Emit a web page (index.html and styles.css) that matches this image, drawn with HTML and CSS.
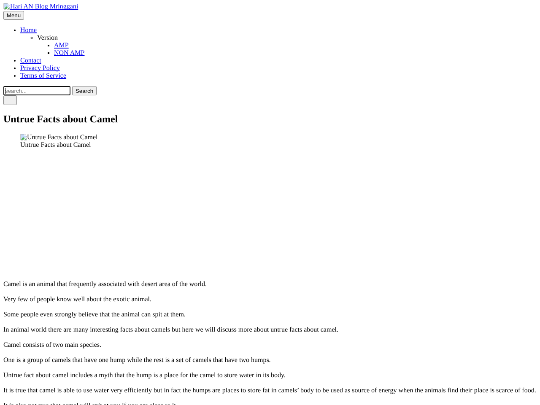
FILE: index.html
```html
<!DOCTYPE html>
<html lang="en">
<head>
<meta charset="utf-8">
<title>Untrue Facts about Camel</title>
<link rel="stylesheet" href="styles.css">
</head>
<body>
<div class="viewport">
<main class="page">
<header>
<a class="logo" href="#"><svg class="broken" viewBox="0 0 16 16"><path d="M1 1h10l4 4v10H1z" fill="#c3d9f7" stroke="#999"/><path d="M2 14l5-6 3 3 3-2v5z" fill="#4caf50"/><path d="M11 1v4h4M15 8l-8 8" fill="none" stroke="#fff" stroke-width="2"/></svg>Hari AN Blog Mringgani</a>
<button class="btn menu">Menu</button>
</header>
<ul class="nav">
<li><a href="#">Home</a>
<ul class="level2"><li>Version
<ul class="level3"><li><a href="#">AMP</a></li><li><a href="#">NON AMP</a></li></ul>
</li></ul>
</li>
<li><a href="#">Contact</a></li>
<li><a href="#">Privacy Policy</a></li>
<li><a href="#">Terms of Service</a></li>
</ul>
<form class="search"><input type="text" placeholder="search..."><button type="button" class="btn submit">Search</button></form>
<button class="btn toggle" aria-label="Toggle"></button>
<h1>Untrue Facts about Camel</h1>
<figure>
<div class="alt"><svg class="broken" viewBox="0 0 16 16"><path d="M1 1h10l4 4v10H1z" fill="#c3d9f7" stroke="#999"/><path d="M2 14l5-6 3 3 3-2v5z" fill="#4caf50"/><path d="M11 1v4h4M15 8l-8 8" fill="none" stroke="#fff" stroke-width="2"/></svg>Untrue Facts about Camel</div>
<figcaption>Untrue Facts about Camel</figcaption>
</figure>
<article>
<p>Camel is an animal that frequently associated with desert area of the world.</p>
<p>Very few of people know well about the exotic animal.</p>
<p>Some people even strongly believe that the animal can spit at them.</p>
<p>In animal world there are many interesting facts about camels but here we will discuss more about untrue facts about camel.</p>
<p>Camel consists of two main species.</p>
<p>One is a group of camels that have one hump while the rest is a set of camels that have two humps.</p>
<p>Untrue fact about camel includes a myth that the hump is a place for the camel to store water in its body.</p>
<p>It is true that camel is able to use water very efficiently but in fact the humps are places to store fat in camels’ body to be used as source of energy when the animals find their place is scarce of food.</p>
<p>It is also not true that camel will spit at you if you are close to it.</p>
</article>
</main>
</div>
</body>
</html>
```
FILE: styles.css
```css
body {
  margin: 0;
  background: #fff;
}
.viewport {
  width: 540px;
  height: 405px;
  overflow: hidden;
}
.page {
  box-sizing: border-box;
  width: 1280px;
  height: 960px;
  padding: 7px 8px 0;
  overflow: hidden;
  font: 16px/18px "Liberation Serif", "Times New Roman", serif;
  color: #000;
  background: #fff;
  white-space: nowrap;
  text-rendering: geometricPrecision;
  transform: scale(0.421875);
  transform-origin: 0 0;
  will-change: transform;
}
a {
  color: #0000ee;
  text-decoration-thickness: 2px;
  text-decoration-skip-ink: none;
}
.logo {
  display: flex;
  width: max-content;
  height: 19px;
  text-decoration: underline 2px;
}
.broken {
  width: 16px;
  height: 16px;
  flex: none;
}
.btn {
  display: block;
  box-sizing: border-box;
  margin: 0;
  padding: 0;
  border: 1px solid #808080;
  border-radius: 3px;
  background: #efefef;
  color: #000;
  font: 13.33px/15px "Liberation Sans", Arial, sans-serif;
}
.menu {
  width: 49px;
  height: 21px;
}
ul {
  margin: 0;
  padding-left: 40px;
}
.nav {
  margin-top: 16px;
  list-style: disc;
}
.level2 {
  list-style: circle;
}
.level3 {
  list-style: square;
}
.search {
  display: flex;
  gap: 4px;
  margin: 15px 0 0;
}
.search input {
  box-sizing: border-box;
  width: 159px;
  height: 22px;
  margin: 0;
  padding: 0 2px;
  border: 2px solid #101010;
  border-radius: 3px;
  outline: none;
  background: linear-gradient(#000, #000) 2px center / 1px 15px no-repeat #fff;
  font: 13.33px/15px "Liberation Sans", Arial, sans-serif;
}
.search input::placeholder {
  color: #757575;
}
.submit {
  width: 58px;
  height: 22px;
}
.toggle {
  width: 32px;
  height: 23px;
}
h1 {
  margin: 20px 0 0;
  font-size: 24px;
  line-height: 28px;
}
figure {
  height: 348px;
  margin: 20px 40px 0;
}
.alt {
  display: flex;
}
p {
  height: 18px;
  margin: 0 0 18px;
}
```
